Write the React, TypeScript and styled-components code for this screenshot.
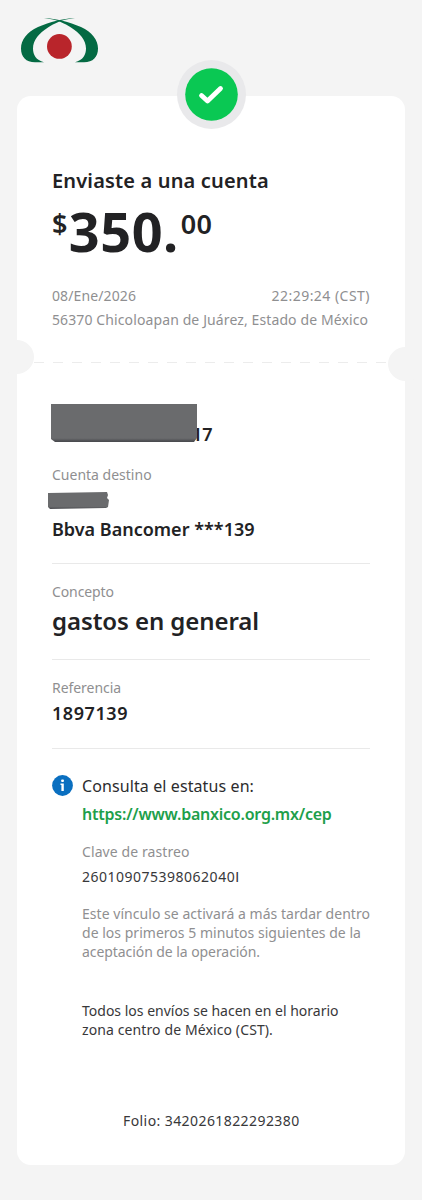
import React from "react";
import styled, { createGlobalStyle } from "styled-components";

const GlobalStyle = createGlobalStyle`
  * { box-sizing: border-box; }
  body {
    margin: 0;
    background: #f4f4f4;
    font-family: "Noto Sans", sans-serif;
    color: #222224;
  }
`;

const Page = styled.main`
  width: 422px;
  height: 1200px;
  padding: 17px 17px 0;
  overflow: hidden;
  background: #f4f4f4;
`;

const Header = styled.header`
  height: 79px;
  padding-left: 3px;
`;

const Card = styled.article`
  position: relative;
  width: 388px;
  height: 1069px;
  background: #fff;
  border-radius: 14px;
`;

const StatusBadge = styled.div`
  position: absolute;
  top: -36px;
  left: 160px;
  width: 69px;
  height: 69px;
  display: flex;
  align-items: center;
  justify-content: center;
  border-radius: 50%;
  background: #e9e9eb;
`;

const Summary = styled.section`
  height: 266px;
  padding: 73px 35px 0;
`;

const Title = styled.h1`
  margin: 0;
  font-size: 20px;
  line-height: 24px;
  font-weight: 600;
  letter-spacing: 0.16px;
  white-space: nowrap;
`;

const Amount = styled.div`
  display: flex;
  height: 60px;
  margin-top: 8px;
`;

const AmountWhole = styled.span`
  margin-left: 1px;
  font-size: 54px;
  line-height: 60px;
  font-weight: 700;
  letter-spacing: 0.5px;
`;

const AmountMinor = styled.sup`
  padding-top: 7px;
  font-size: 27px;
  line-height: 32px;
  font-weight: 600;
  letter-spacing: 0.4px;
  vertical-align: baseline;
`;

const Cents = styled(AmountMinor)`
  margin-left: 2px;
`;

const Text = styled.p<{ $track?: number; $top?: number; $dark?: boolean }>`
  margin: ${(p) => p.$top ?? 0}px 0 0;
  font-size: 14px;
  line-height: 20px;
  letter-spacing: ${(p) => p.$track ?? 0}px;
  color: ${(p) => (p.$dark ? "#38383a" : "#8f8f91")};
  white-space: nowrap;
`;

const PlainLetter = styled.span`
  font-family: Lato, sans-serif;
`;

const DateRow = styled.div`
  display: flex;
  justify-content: space-between;
  margin-top: 25px;
`;

const TearLine = styled.div`
  position: relative;
  height: 1px;
  margin: 0 17px;
  background: repeating-linear-gradient(90deg, #ececec 0 10px, transparent 10px 19px);
`;

const Notch = styled.span<{ $side: "left" | "right" }>`
  position: absolute;
  width: 35px;
  height: 34px;
  border-radius: 50%;
  background: #f4f4f4;
  top: ${(p) => (p.$side === "left" ? -22 : -15)}px;
  ${(p) => p.$side}: -35px;
`;

const Details = styled.section`
  padding: 41px 35px 0;
`;

const Recipient = styled.div`
  display: flex;
  align-items: flex-end;
  height: 38px;
  margin-left: -1px;
`;

const NameMask = styled.span`
  z-index: 1;
  width: 146px;
  height: 38px;
  background: linear-gradient(#6a6b6d 0 90%, #4b4c50 98%);
  clip-path: polygon(0 0, 100% 0, 100% 34px, 143px 100%, 4px 100%, 0 35px);
`;

const AccountMask = styled.div`
  width: 61px;
  height: 17px;
  margin: 7px 0 0 -4px;
  background: linear-gradient(#6a6b6d 0 85%, #4b4c50 100%);
  clip-path: polygon(0 1px, 59px 0, 60px 3px, 59px 6px, 61px 8px, 60px 15px, 58px 16px, 2px 100%, 0 15px);
`;

const Value = styled.p<{ $top?: number; $track?: number; $large?: boolean }>`
  margin: ${(p) => p.$top ?? 0}px 0 0;
  font-size: ${(p) => (p.$large ? 24 : 18)}px;
  line-height: ${(p) => (p.$large ? 32 : 24)}px;
  font-weight: 600;
  letter-spacing: ${(p) => p.$track ?? 0}px;
  white-space: nowrap;
`;

const NameTail = styled(Value)`
  margin-left: -5px;
  margin-bottom: -4px;
`;

const Rule = styled.hr<{ $top?: number }>`
  height: 1px;
  margin: ${(p) => p.$top ?? 22}px 0 18px;
  border: 0;
  background: #e9e9e9;
`;

const Tracking = styled.div`
  display: flex;
  gap: 9px;
  margin-top: 26px;
`;

const InfoIcon = styled.svg`
  flex: none;
  width: 21px;
  height: 21px;
`;

const TrackingBody = styled.div`
  flex: 1;
  min-width: 0;
`;

const Lead = styled.p`
  margin: 0;
  font-size: 16px;
  line-height: 22px;
  letter-spacing: 0.1px;
  color: #2c2c2e;
`;

const Link = styled.a`
  display: block;
  margin-top: 6px;
  font-size: 16px;
  line-height: 22px;
  font-weight: 600;
  letter-spacing: -0.23px;
  color: #1e9f4b;
  text-decoration: none;
  white-space: nowrap;
`;

const Note = styled.div<{ $top: number }>`
  margin-top: ${(p) => p.$top}px;

  ${Text} {
    line-height: 19.2px;
  }
`;

const Folio = styled(Text)`
  margin-top: 72px;
  padding-left: 71px;
`;

function BankLogo() {
  const arm =
    "M55 1C43 1.500 30 5 18 10C7 15 1 23 1 31.500C1 40 6 45.300 15 45.300H24C16 43 13 38 13 31.500C13 23 19 16.500 28 10.500C34 6.500 42 2.500 55 1Z";
  return (
    <svg width="79" height="47" viewBox="0 0 79 47" aria-label="Banorte">
      <g fill="#046a43">
        <path d={arm} />
        <path d={arm} transform="matrix(-1 0 0 1 79 0)" />
      </g>
      <circle cx="39.4" cy="29.4" r="12.4" fill="#b9252b" />
    </svg>
  );
}

export default function App() {
  return (
    <>
      <GlobalStyle />
      <Page>
        <Header>
          <BankLogo />
        </Header>
        <Card>
          <StatusBadge>
            <svg width="53" height="53" viewBox="0 0 53 53">
              <circle cx="26.500" cy="26.500" r="26.300" fill="#0ac853" />
              <path d="M16.500 27.500L22.500 33L35.500 20.500" fill="none" stroke="#fff" strokeWidth="4.800" strokeLinecap="round" strokeLinejoin="round" />
            </svg>
          </StatusBadge>

          <Summary>
            <Title>Enviaste a una cuenta</Title>
            <Amount>
              <AmountMinor>$</AmountMinor>
              <AmountWhole>350.</AmountWhole>
              <Cents>00</Cents>
            </Amount>
            <DateRow>
              <Text $track={0.11}>08/Ene/2026</Text>
              <Text $track={0.47}>22:29:24 (CST)</Text>
            </DateRow>
            <Text $top={4} $track={0.11}>56370 Chicoloapan de Juárez, Estado de México</Text>
          </Summary>

          <TearLine>
            <Notch $side="left" />
            <Notch $side="right" />
          </TearLine>

          <Details>
            <Recipient>
              <NameMask />
              <NameTail>17</NameTail>
            </Recipient>
            <Text $top={23}>Cuenta destino</Text>
            <AccountMask />
            <Value $top={8}>Bbva Bancomer ***139</Value>
            <Rule />
            <Text $track={-0.1}>Concepto</Text>
            <Value $large $top={3} $track={-0.08}>gastos en general</Value>
            <Rule />
            <Text $track={-0.05}>Referencia</Text>
            <Value $top={3} $track={0.56}>1897139</Value>
            <Rule $top={23} />

            <Tracking>
              <InfoIcon viewBox="0 0 21 21">
                <circle cx="10.500" cy="10.500" r="10.400" fill="#0a6fc0" />
                <rect x="9.200" y="4.500" width="2.700" height="2.500" rx="0.800" fill="#fff" />
                <path d="M8.500 8.500H11.800V16H9.400V10H8.500Z" fill="#fff" />
              </InfoIcon>
              <TrackingBody>
                <Lead>Consulta el estatus en:</Lead>
                <Link href="https://www.banxico.org.mx/cep">https://www.banxico.org.mx/cep</Link>
                <Text $top={17} $track={0.09}>Clave de rastreo</Text>
                <Text $top={5} $track={0.5} $dark>
                  260109075398062040<PlainLetter>I</PlainLetter>
                </Text>
                <Note $top={17}>
                  <Text $track={0.04}>Este vínculo se activará a más tardar dentro</Text>
                  <Text $track={0.02}>de los primeros 5 minutos siguientes de la</Text>
                  <Text $track={-0.07}>aceptación de la operación.</Text>
                </Note>
                <Note $top={39.4}>
                  <Text $dark>Todos los envíos se hacen en el horario</Text>
                  <Text $track={0.11} $dark>zona centro de México (CST).</Text>
                </Note>
              </TrackingBody>
            </Tracking>
            <Folio as="footer" $track={0.42} $dark>Folio: 3420261822292380</Folio>
          </Details>
        </Card>
      </Page>
    </>
  );
}
